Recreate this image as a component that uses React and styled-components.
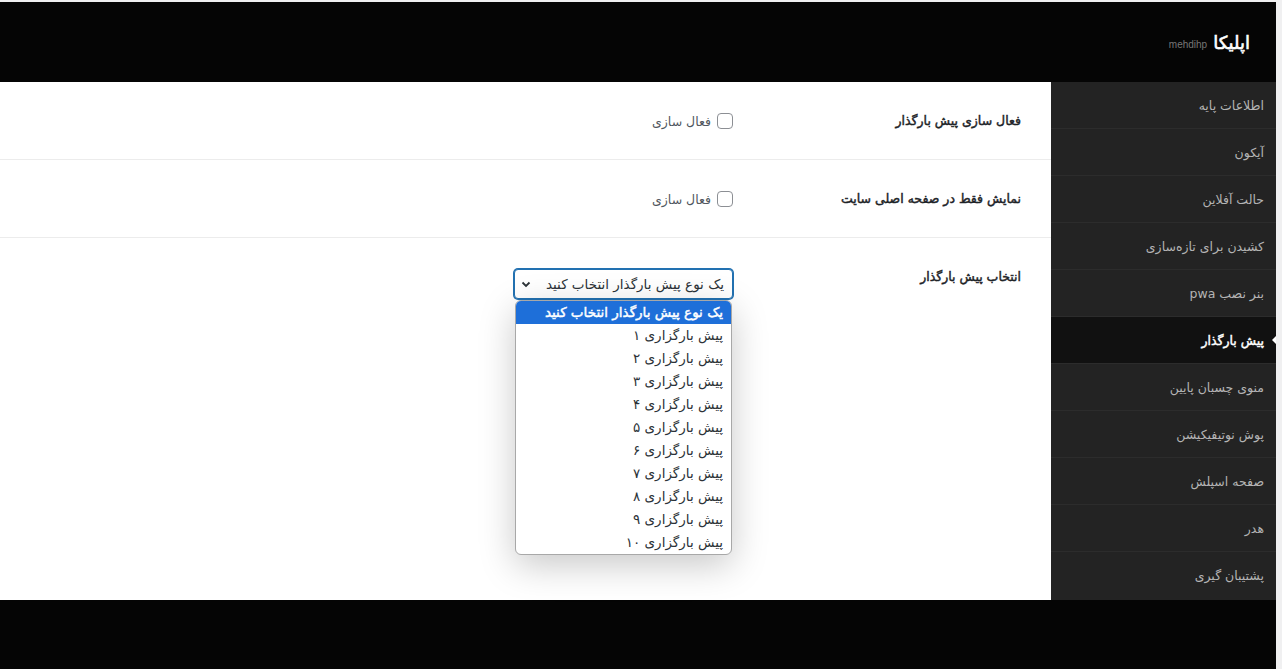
import React, { useState } from 'react';
import styled, { createGlobalStyle, css } from 'styled-components';

const GlobalStyle = createGlobalStyle`
  html, body {
    margin: 0;
    padding: 0;
    background: #f0f0f1;
  }
  body {
    font-family: "DejaVu Sans", "Noto Sans", sans-serif;
  }
`;

// DejaVu bold runs much wider than the screenshot's font, so thicken the regular face instead
const heavy = css`
  font-weight: normal;
  -webkit-text-stroke: 0.45px currentColor;
`;

const Page = styled.div`
  height: 669px;
  padding: 2px 6px 0 0;
  box-sizing: border-box;
  overflow: hidden;
`;

const Shell = styled.div`
  direction: rtl;
  height: 100%;
  background: #050505;
  display: flex;
  flex-direction: column;
`;

const Header = styled.header`
  height: 80px;
  display: flex;
  align-items: center;
  gap: 6px;
  padding-right: 26px;
  flex-shrink: 0;
`;

const Brand = styled.h1`
  margin: 0;
  color: #fff;
  font-size: 18px;
  ${heavy}
  -webkit-text-stroke-width: 0.6px;
`;

const Author = styled.span`
  color: #777;
  font-size: 10px;
  font-family: "Liberation Sans", sans-serif;
  margin-top: 4px;
`;

const Body = styled.div`
  display: flex;
  height: 518px;
`;

const Sidebar = styled.nav`
  width: 225px;
  flex-shrink: 0;
  background: #232323;
`;

const NavItem = styled.div`
  position: relative;
  height: 47px;
  box-sizing: border-box;
  display: flex;
  align-items: center;
  padding-right: 12px;
  font-size: 12.5px;
  color: ${(p) => (p.$active ? '#fff' : '#b4b4b4')};
  background: ${(p) => (p.$active ? '#111' : 'transparent')};
  border-bottom: 1px solid #2c2c2c;
  ${(p) => p.$active && heavy}

  &:last-child {
    border-bottom: none;
  }

  ${(p) =>
    p.$active &&
    css`
      &::after {
        content: '';
        position: absolute;
        right: 0;
        top: 50%;
        margin-top: -4px;
        border: 4px solid transparent;
        border-right-color: #fff;
      }
    `}
`;

const Main = styled.main`
  flex: 1;
  background: #fff;
`;

const Row = styled.div`
  display: grid;
  grid-template-columns: 288px 1fr;
  padding: 29px 30px 28px 0;
  border-bottom: ${(p) => (p.$last ? 'none' : '1px solid #ececec')};
`;

const Label = styled.div`
  font-size: 12.5px;
  color: #1d2327;
  line-height: 20px;
  ${heavy}
`;

const Field = styled.div`
  position: relative;
  display: flex;
  align-items: ${(p) => (p.$top ? 'flex-start' : 'center')};
  min-height: 20px;
`;

const CheckLabel = styled.label`
  display: flex;
  align-items: center;
  gap: 6px;
  font-size: 12.5px;
  color: #50575e;
`;

const Box = styled.span`
  width: 16px;
  height: 16px;
  box-sizing: border-box;
  border: 1px solid #8c8f94;
  border-radius: 4px;
  background: #fff;
`;

const Select = styled.div`
  margin-top: 2px;
  width: 219px;
  height: 30px;
  box-sizing: border-box;
  border: 1px solid #2271b1;
  box-shadow: 0 0 0 1px #2271b1;
  border-radius: 4px;
  display: flex;
  align-items: center;
  justify-content: space-between;
  padding: 0 8px 0 6px;
  font-size: 13.5px;
  color: #2c3338;
  background: #fff;
`;

const Dropdown = styled.ul`
  position: absolute;
  top: 33px;
  right: 1px;
  width: 217px;
  box-sizing: border-box;
  margin: 0;
  padding: 0;
  list-style: none;
  background: #fff;
  border: 1px solid #a8a8a8;
  border-radius: 6px;
  overflow: hidden;
  box-shadow: 0 10px 36px rgba(0, 0, 0, 0.22);
  z-index: 2;
`;

const Option = styled.li`
  height: 23px;
  line-height: 23px;
  padding-right: 8px;
  font-size: 13.5px;
  white-space: nowrap;
  color: ${(p) => (p.$selected ? '#fff' : '#2c3338')};
  background: ${(p) => (p.$selected ? '#1e6fd9' : 'transparent')};
  ${(p) => p.$selected && heavy}
`;

const navItems = [
  'اطلاعات پایه',
  'آیکون',
  'حالت آفلاین',
  'کشیدن برای تازه‌سازی',
  'بنر نصب pwa',
  'پیش بارگذار',
  'منوی چسبان پایین',
  'پوش نوتیفیکیشن',
  'صفحه اسپلش',
  'هدر',
  'پشتیبان گیری',
];

const placeholder = 'یک نوع پیش بارگذار انتخاب کنید';
const faDigits = ['۱', '۲', '۳', '۴', '۵', '۶', '۷', '۸', '۹', '۱۰'];
const options = [placeholder, ...faDigits.map((d) => `پیش بارگزاری ${d}`)];

const Chevron = () => (
  <svg width="10" height="10" viewBox="0 0 10 10">
    <path d="M1.5 3.5 L5 7 L8.5 3.5" fill="none" stroke="#2c3338" strokeWidth="1.8" />
  </svg>
);

const CheckRow = ({ title }) => (
  <Row>
    <Label>{title}</Label>
    <Field>
      <CheckLabel>
        <Box />
        فعال سازی
      </CheckLabel>
    </Field>
  </Row>
);

const App = () => {
  const [selected] = useState(0);

  return (
    <Page>
      <GlobalStyle />
      <Shell>
        <Header>
          <Brand>اپلیکا</Brand>
          <Author>mehdihp</Author>
        </Header>
        <Body>
          <Sidebar>
            {navItems.map((item) => (
              <NavItem key={item} $active={item === 'پیش بارگذار'}>
                {item}
              </NavItem>
            ))}
          </Sidebar>
          <Main>
            <CheckRow title="فعال سازی پیش بارگذار" />
            <CheckRow title="نمایش فقط در صفحه اصلی سایت" />
            <Row $last>
              <Label>انتخاب پیش بارگذار</Label>
              <Field $top>
                <Select>
                  <span>{options[selected]}</span>
                  <Chevron />
                </Select>
                <Dropdown>
                  {options.map((opt, i) => (
                    <Option key={opt} $selected={i === selected}>
                      {opt}
                    </Option>
                  ))}
                </Dropdown>
              </Field>
            </Row>
          </Main>
        </Body>
      </Shell>
    </Page>
  );
};

export default App;
